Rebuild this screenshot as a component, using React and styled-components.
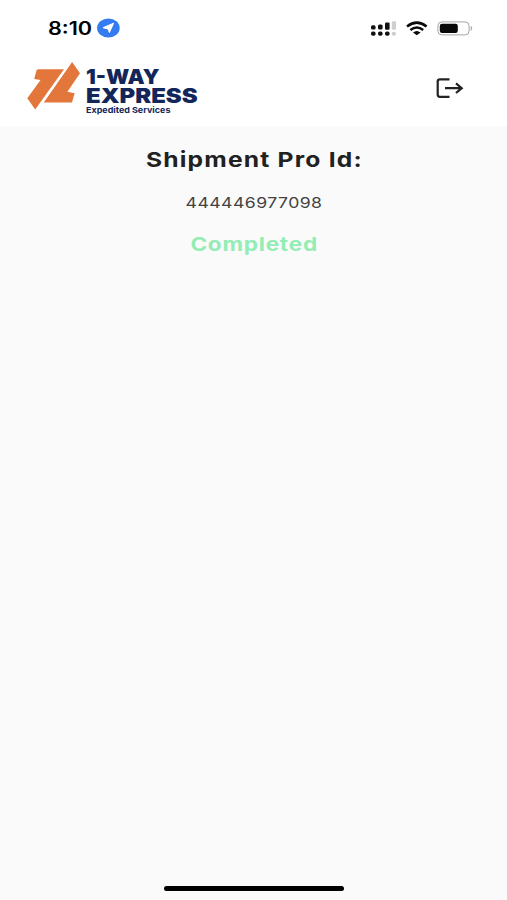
import React from "react";
import styled, { createGlobalStyle } from "styled-components";

const GlobalStyle = createGlobalStyle`
  * { box-sizing: border-box; }
  body { margin: 0; background: #fafafa; }
`;

const Screen = styled.div`
  display: flex;
  flex-direction: column;
  height: 900px;
  overflow: hidden;
  background: #fafafa;
  color: #212121;
  font-family: Inter, "Liberation Sans", sans-serif;
`;

const StatusBar = styled.div`
  display: flex;
  align-items: center;
  justify-content: space-between;
  height: 56px;
  flex: none;
  padding: 0 33px 0 48px;
  background: #fff;
`;

const Clock = styled.div`
  display: flex;
  align-items: center;
  gap: 5px;
`;

const Stretched = styled.span`
  display: block;
  white-space: nowrap;
  transform: scaleX(${(p) => p.$scale});
  transform-origin: ${(p) => p.$origin || "center"};
`;

const Time = styled.div`
  width: 44px;
  padding-top: 2px;
  font-size: 18px;
  line-height: 24px;
  font-weight: 600;
  color: #000;
`;

const Indicators = styled.svg`
  display: block;
`;

const Header = styled.header`
  display: flex;
  align-items: center;
  justify-content: space-between;
  height: 70px;
  flex: none;
  padding: 0 43px 6px 27px;
  background: #fff;
`;

const Brand = styled.div`
  display: flex;
  gap: 6px;
  height: 56px;
`;

const BrandText = styled.div`
  width: 113px;
  padding-top: 8px;
  color: #12265a;
`;

const BrandLine = styled.div`
  height: 18.5px;
  line-height: 18.5px;
  font-size: 19.8px;
  font-weight: 900;
`;

const Tagline = styled.div`
  height: 11px;
  line-height: 11px;
  font-size: 8px;
  font-weight: 700;
`;

const LogoutButton = styled.button`
  display: flex;
  padding: 0;
  border: 0;
  background: none;
  color: #222;
`;

const Content = styled.main`
  display: flex;
  flex: 1;
  flex-direction: column;
  align-items: center;
  padding: 18px 0 0 1px;
`;

const Title = styled.h1`
  margin: 0;
  font-size: 20.5px;
  line-height: 32px;
  font-weight: 650;
  letter-spacing: 1px;
`;

const ShipmentNumber = styled.p`
  margin: 15px 0 0;
  font-size: 14.7px;
  line-height: 24px;
  letter-spacing: 0.38px;
  color: #424242;
`;

const Status = styled.p`
  margin: 16px 0 0;
  font-size: 18.8px;
  line-height: 28px;
  font-weight: 700;
  letter-spacing: 0.65px;
  color: #93edb5;
`;

const BottomBar = styled.div`
  display: flex;
  justify-content: center;
  flex: none;
  height: 14px;
  padding-left: 1px;
`;

const HomeIndicator = styled.div`
  width: 180px;
  height: 5px;
  border-radius: 3px;
  background: #000;
`;

function LocationBadge() {
  return (
    <svg width="23" height="20" viewBox="0 0 23 20">
      <ellipse cx="11.4" cy="10" rx="11.3" ry="9.6" fill="#347bf0" />
      <path d="M16.6 5.2 L12.4 14.6 L11 10.9 L6 9.7 Z" fill="#fff" stroke="#fff" strokeLinejoin="round" />
    </svg>
  );
}

function PhoneIndicators() {
  return (
    <Indicators width="104" height="20" viewBox="370 18 104 20">
      <g fill="#111">
        <rect x="371" y="25.3" width="4.6" height="4.2" rx="1.6" />
        <rect x="378" y="24.5" width="4.6" height="5" rx="1.5" />
        <rect x="385" y="22.6" width="4.6" height="7.2" rx="1.2" />
        <rect x="371" y="31.6" width="4.6" height="4.2" rx="1.8" />
        <rect x="378" y="31.6" width="4.6" height="4.2" rx="1.8" />
        <rect x="385" y="31.6" width="4.6" height="4.2" rx="1.8" />
      </g>
      <g fill="#cfcfcf">
        <rect x="391.8" y="21.3" width="4.2" height="8.5" rx="1.2" />
        <rect x="391.8" y="31.7" width="4.2" height="4" rx="1.8" />
      </g>
      <g fill="none" stroke="#0b0b0b" strokeWidth="2.5">
        <path d="M407 26.4 Q416.8 18.8 426.6 26.4" />
        <path d="M410.4 30 Q416.8 24.9 423.2 30" />
      </g>
      <path d="M413 32.4 Q416.8 29.4 420.6 32.4 L416.8 35.3 Z" fill="#0b0b0b" />
      <rect x="437.9" y="21.9" width="31.2" height="13" rx="4" fill="#fff" stroke="#a5a5a5" />
      <rect x="439.8" y="23.7" width="18" height="9.4" rx="2.3" fill="#080808" />
      <path d="M471 26.3 Q472.8 28.4 471 30.5 Z" fill="#999" stroke="#999" strokeWidth=".5" />
    </Indicators>
  );
}

function BrandMark() {
  return (
    <svg width="53" height="56" viewBox="27 60 53 56" fill="#e2763b">
      <path d="M38 69.2 H64 L35.2 109.6 L27.3 98.2 L40.5 80 L34.2 79.1 L36.5 70.2 Z" />
      <path d="M72.1 62 L80 73.2 L67.4 91.8 L74.6 93.3 L72 102.6 H43.8 Z" />
    </svg>
  );
}

export default function App() {
  return (
    <Screen>
      <GlobalStyle />
      <StatusBar>
        <Clock>
          <Time><Stretched $scale={1.2} $origin="left">8:10</Stretched></Time>
          <LocationBadge />
        </Clock>
        <PhoneIndicators />
      </StatusBar>
      <Header>
        <Brand>
          <BrandMark />
          <BrandText>
            <BrandLine><Stretched $scale={1.09} $origin="left">1-WAY</Stretched></BrandLine>
            <BrandLine><Stretched $scale={1.21} $origin="left">EXPRESS</Stretched></BrandLine>
            <Tagline><Stretched $scale={1.12} $origin="left">Expedited Services</Stretched></Tagline>
          </BrandText>
        </Brand>
        <LogoutButton aria-label="Log out">
          <svg width="28" height="22" viewBox="436 77 28 22" fill="none" stroke="currentColor" strokeWidth="2.2">
            <path d="M449.5 79.4 H440 Q437.7 79.4 437.7 81.5 V94.5 Q437.7 96.8 440 96.8 H449.5" />
            <path d="M445 88.2 H461.5 M456 83.4 L461.7 88.2 L456 93" />
          </svg>
        </LogoutButton>
      </Header>
      <Content>
        <Title><Stretched $scale={1.2}>Shipment Pro Id:</Stretched></Title>
        <ShipmentNumber><Stretched $scale={1.2}>444446977098</Stretched></ShipmentNumber>
        <Status><Stretched $scale={1.2}>Completed</Stretched></Status>
      </Content>
      <BottomBar><HomeIndicator /></BottomBar>
    </Screen>
  );
}
